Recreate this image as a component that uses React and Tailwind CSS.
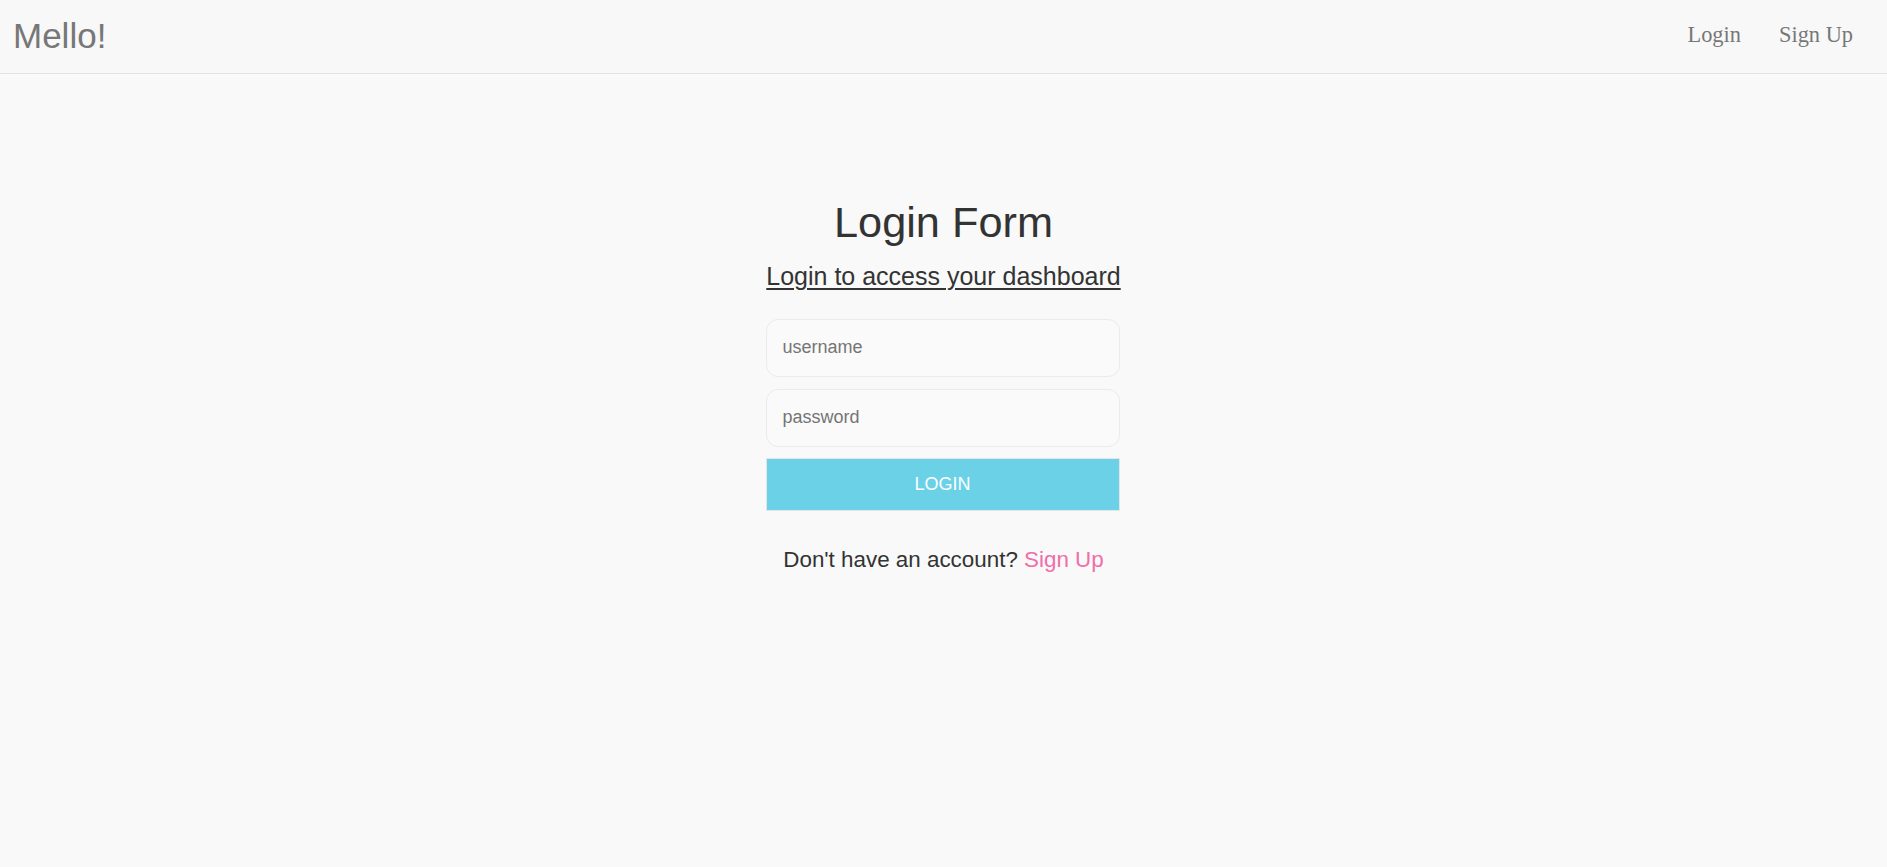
export default function App() {
  return (
    <div className="min-h-[867px] w-full bg-[#f9f9f9] font-['Liberation_Sans',Arial,sans-serif]">
      <header className="h-[74px] border-b border-[#e3e3e3] bg-[#f8f8f8] flex items-center justify-between pl-[13px] pr-[34px]">
        <div className="text-[35px] leading-none text-[#777777] pb-[2px]">Mello!</div>
        <nav className="flex items-center gap-[38px] font-['Liberation_Serif','Times_New_Roman',serif] text-[22.4px] text-[#777777] pb-[4px]">
          <a className="cursor-pointer">Login</a>
          <a className="cursor-pointer">Sign Up</a>
        </nav>
      </header>
      <main className="flex flex-col items-center pt-[124px]">
        <h1 className="text-[43.3px] leading-[1.15] text-[#333333]">Login Form</h1>
        <p className="mt-[14px] text-[25px] leading-[1.15] text-[#333333] underline underline-offset-[3px] decoration-[1.5px]">
          Login to access your dashboard
        </p>
        <form className="mt-[28px] w-[354px] flex flex-col -translate-x-[1px]" onSubmit={(e) => e.preventDefault()}>
          <input
            type="text"
            placeholder="username"
            className="h-[58px] w-full rounded-[12px] border border-[#ebebeb] bg-[#fafafa] px-[16px] text-[18px] text-[#555] placeholder:text-[#757575] outline-none"
          />
          <input
            type="password"
            placeholder="password"
            className="mt-[12px] h-[58px] w-full rounded-[12px] border border-[#ebebeb] bg-[#fafafa] px-[16px] text-[18px] text-[#555] placeholder:text-[#757575] outline-none"
          />
          <button
            type="submit"
            className="mt-[11px] h-[53px] w-full bg-[#6ad1e7] border border-[#e5e5e5] text-white text-[18px] uppercase"
          >
            Login
          </button>
        </form>
        <p className="mt-[32px] text-[22.4px] text-[#333333]">
          Don't have an account? <a className="text-[#f06eaa] cursor-pointer">Sign Up</a>
        </p>
      </main>
    </div>
  );
}
